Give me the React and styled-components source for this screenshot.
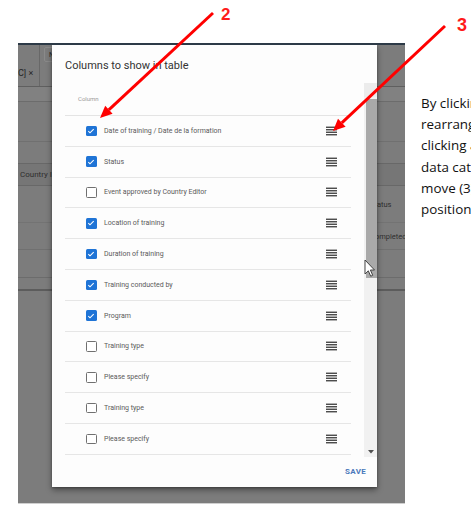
import React from "react";
import styled, { createGlobalStyle } from "styled-components";

const GlobalStyle = createGlobalStyle`
  html, body { margin: 0; padding: 0; background: #ffffff; overflow: hidden; }
  body { font-family: Roboto, "Liberation Sans", sans-serif; }
`;

const Page = styled.div`
  position: relative;
  width: 471px;
  height: 514px;
  display: flex;
  align-items: flex-start;
  padding: 43px 0 0 18px;
  box-sizing: border-box;
  overflow: hidden;
`;

const Shot = styled.div`
  position: relative;
  flex: none;
  width: 387px;
  height: 461px;
  box-sizing: border-box;
  background: #7c7c7c;
  border-top: 2px solid #2d3a47;
  border-bottom: 1px solid #cfcfcf;
  overflow: hidden;
`;

const BgTable = styled.div`
  display: flex;
  flex-direction: column;
  height: 100%;
`;

const BgRow = styled.div`
  flex: none;
  height: ${(p) => p.$h}px;
  background: ${(p) => p.$bg || "transparent"};
  border-bottom: ${(p) => p.$bw || 1}px solid ${(p) => p.$line || "#6e6e6e"};
  display: flex;
  align-items: center;
  font-size: 7.5px;
  color: #2e2e2e;
  white-space: nowrap;
`;

const BgFill = styled.div`
  flex: 1;
`;

const ToolLeft = styled.div`
  display: flex;
  align-items: stretch;
  height: 100%;
  font-size: 9px;
  color: #262626;
`;

const ToolText = styled.span`
  width: 22px;
  display: flex;
  align-items: center;
  padding-top: 14px;
  box-sizing: border-box;
  border-right: 1px solid #686868;
  margin-right: 4px;
`;

const Chip = styled.span`
  margin-top: 2px;
  height: 15px;
  width: 20px;
  border: 1px solid #8a8a8a;
  border-radius: 2px;
  padding-left: 4px;
  box-sizing: border-box;
  display: flex;
  align-items: center;
  font-size: 7px;
`;

const LeftText = styled.span`
  padding-left: 2px;
  font-size: 8px;
`;

const RightText = styled.span`
  margin-left: auto;
  width: 35px;
`;

const Modal = styled.div`
  position: absolute;
  left: 34px;
  top: 0;
  width: 325px;
  height: 442px;
  background: #fdfdfd;
  box-shadow: 0 3px 6px rgba(0, 0, 0, 0.4), 0 1px 2px rgba(0, 0, 0, 0.25);
  display: flex;
  flex-direction: column;
`;

const Title = styled.div`
  flex: none;
  height: 38px;
  box-sizing: border-box;
  padding: 14px 13px 0;
  font-size: 11px;
  line-height: 14px;
  color: #333333;
`;

const ScrollArea = styled.div`
  flex: none;
  height: 374px;
  display: flex;
`;

const ListCol = styled.div`
  flex: 1;
  padding: 0 13px;
  display: flex;
  flex-direction: column;
`;

const Header = styled.div`
  flex: none;
  height: 33px;
  box-sizing: border-box;
  padding: 12px 0 0 13px;
  border-bottom: 1px solid #e4e4e4;
  font-size: 6px;
  line-height: 8px;
  color: #9a9a9a;
`;

const Row = styled.div`
  flex: none;
  height: 30.8px;
  box-sizing: border-box;
  border-bottom: 1px solid #e6e6e6;
  display: flex;
  align-items: center;
  padding: 0 14px 0 21px;
`;

const Box = styled.span`
  flex: none;
  width: 10.5px;
  height: 10.5px;
  box-sizing: border-box;
  border-radius: 1.5px;
  background: ${(p) => (p.$on ? "#1f74d6" : "#ffffff")};
  border: ${(p) => (p.$on ? "none" : "1.3px solid #707070")};
  display: flex;
  align-items: center;
  justify-content: center;
`;

const Label = styled.span`
  margin-left: 7.5px;
  font-size: 7px;
  color: #5a5a5a;
  flex: 1;
  white-space: nowrap;
`;

const Handle = styled.svg`
  flex: none;
  display: block;
`;

const Scrollbar = styled.div`
  flex: none;
  width: 13px;
  background: #f1f1f1;
  display: flex;
  flex-direction: column;
`;

const ScrollBtn = styled.div`
  flex: none;
  height: ${(p) => p.$h}px;
  background: ${(p) => p.$bg};
  display: flex;
  align-items: center;
  justify-content: center;
`;

const Thumb = styled.div`
  flex: none;
  margin: 2px 0 0 2px;
  height: 179px;
  background: #a9a9a9;
`;

const Track = styled.div`
  flex: 1;
`;

const Footer = styled.div`
  flex: 1;
  display: flex;
  align-items: center;
  justify-content: flex-end;
  padding: 0 11px 0 0;
`;

const SaveButton = styled.span`
  font-size: 8px;
  font-weight: 700;
  letter-spacing: 0.3px;
  color: #4a79bb;
  margin-top: -1px;
`;

const Note = styled.div`
  flex: none;
  margin: 50px 0 0 16px;
  font-family: "Open Sans", "Liberation Sans", sans-serif;
  font-size: 13.4px;
  line-height: 21.2px;
  color: #111111;
  white-space: nowrap;
`;

const Overlay = styled.svg`
  position: absolute;
  left: 0;
  top: 0;
  pointer-events: none;
`;

const Cursor = styled.svg`
  position: absolute;
  left: 364px;
  top: 259px;
`;

const columns = [
  ["Date of training / Date de la formation", true],
  ["Status", true],
  ["Event approved by Country Editor", false],
  ["Location of training", true],
  ["Duration of training", true],
  ["Training conducted by", true],
  ["Program", true],
  ["Training type", false],
  ["Please specify", false],
  ["Training type", false],
  ["Please specify", false],
];

const Check = () => (
  <svg width="8" height="8" viewBox="0 0 24 24">
    <path d="M4 12.5l5 5L20 6.5" fill="none" stroke="#fff" strokeWidth="3.2" />
  </svg>
);

const ReorderIcon = () => (
  <Handle width="11" height="10" viewBox="0 0 11 10">
    <rect x="0" y="0.6" width="11" height="1.3" fill="#3a3a3a" />
    <rect x="0" y="3.1" width="11" height="1.3" fill="#3a3a3a" />
    <rect x="0" y="5.6" width="11" height="1.3" fill="#3a3a3a" />
    <rect x="0" y="8.1" width="11" height="1.3" fill="#3a3a3a" />
  </Handle>
);

export default function App() {
  return (
    <>
      <GlobalStyle />
      <Page>
        <Shot>
          <BgTable>
            <BgRow $h={41} $line="#5f5f5f">
              <ToolLeft>
                <ToolText>C]&nbsp;×</ToolText>
                <Chip>N</Chip>
              </ToolLeft>
            </BgRow>
            <BgRow $h={14} $bg="#818181" $line="#6c6c6c" />
            <BgRow $h={39} $line="#707070" />
            <BgRow $h={21} $line="#686868" />
            <BgRow $h={21} $bg="#767676" $line="#686868">
              <LeftText>Country I</LeftText>
            </BgRow>
            <BgRow $h={36} $line="#737373">
              <RightText>Status</RightText>
            </BgRow>
            <BgRow $h={26} $line="#707070">
              <RightText>Completed</RightText>
            </BgRow>
            <BgRow $h={27} $line="#6c6c6c" />
            <BgRow $h={11} $bw={2} $line="#5c5c5c" />
            <BgFill />
          </BgTable>

          <Modal>
            <Title>Columns to show in table</Title>
            <ScrollArea>
              <ListCol>
                <Header>Column</Header>
                {columns.map(([name, on], i) => (
                  <Row key={i}>
                    <Box $on={on}>{on && <Check />}</Box>
                    <Label>{name}</Label>
                    <ReorderIcon />
                  </Row>
                ))}
              </ListCol>
              <Scrollbar>
                <ScrollBtn $h={14} $bg="#ececec" />
                <Thumb />
                <Track />
                <ScrollBtn $h={10} $bg="#f1f1f1">
                  <svg width="6" height="4" viewBox="0 0 6 4">
                    <path d="M0 0h6L3 3.5z" fill="#505050" />
                  </svg>
                </ScrollBtn>
              </Scrollbar>
            </ScrollArea>
            <Footer>
              <SaveButton>SAVE</SaveButton>
            </Footer>
          </Modal>
        </Shot>

        <Note>
          By clicking on the three lines you can
          <br />
          rearrange the order of the columns by
          <br />
          clicking and holding on the selected
          <br />
          data category (2) and dragging it to
          <br />
          move (3) to its new
          <br />
          position
        </Note>

        <Cursor width="11" height="18" viewBox="0 0 11 18">
          <path
            d="M1 1v14l3.3-3.2 2.4 5.4 2-0.9-2.3-5.3H10.5z"
            fill="#ffffff"
            stroke="#333333"
            strokeWidth="0.9"
            strokeLinejoin="round"
          />
        </Cursor>

        <Overlay width="471" height="514" viewBox="0 0 471 514">
          <text
            x="221"
            y="20"
            fill="#ff1a1a"
            fontFamily="'Liberation Sans', sans-serif"
            fontWeight="700"
            fontSize="17"
          >
            2
          </text>
          <line x1="213" y1="13" x2="108.8" y2="109.8" stroke="#ff0000" strokeWidth="3" />
          <polygon points="100,118 112.6,113.8 105.2,105.8" fill="#ff0000" />
          <text
            x="457"
            y="31"
            fill="#ff1a1a"
            fontFamily="'Liberation Sans', sans-serif"
            fontWeight="700"
            fontSize="18"
          >
            3
          </text>
          <line x1="445" y1="26" x2="341.8" y2="122.8" stroke="#ff0000" strokeWidth="3" />
          <polygon points="333,131 345.6,126.8 338.0,118.8" fill="#ff0000" />
        </Overlay>
      </Page>
    </>
  );
}
